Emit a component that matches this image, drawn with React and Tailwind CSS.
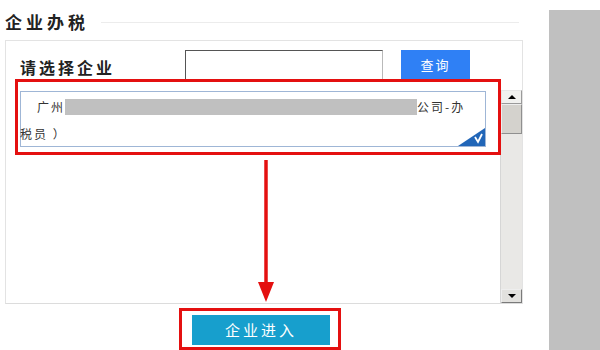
import React from "react";

const cjk = { fontFamily: '"Noto Sans CJK SC", "Noto Sans", sans-serif' };

const ScrollBar = () => (
  <div className="w-[22px] flex flex-col bg-[#e9e8e6] border-l border-[#d6d6d6]">
    <div className="h-[14px] flex items-center justify-center bg-[#f1f1ef] border border-[#9a9a9a] border-t-[#e6e6e6] border-l-[#e6e6e6]">
      <div className="w-0 h-0 border-l-[4px] border-r-[4px] border-b-[4px] border-l-transparent border-r-transparent border-b-black" />
    </div>
    <div className="h-[30px] bg-[#d4d2cd] border border-[#8f8f8f] border-t-[#eeeeee] border-l-[#eeeeee]" />
    <div className="flex-1" />
    <div className="h-[14px] flex items-center justify-center bg-[#e2e1de] border border-[#7a7a7a] border-t-[#eeeeee] border-l-[#eeeeee]">
      <div className="w-0 h-0 border-l-[4px] border-r-[4px] border-t-[4px] border-l-transparent border-r-transparent border-t-black" />
    </div>
  </div>
);

const CompanyItem = () => (
  <div className="relative w-[466px] h-[56px] border border-[#9fb6d6] text-[12px] leading-[27px] tracking-[2px] text-[#333]">
    <div className="pl-[16px] pt-[1px] flex items-center">
      <span>广州</span>
      <span className="inline-block w-[352px] h-[16px] bg-[#c0c0c0]" />
      <span>公司-办</span>
    </div>
    <div className="-ml-[1px]">税员 ）</div>
    <svg className="absolute right-0 bottom-0" width="27" height="18" viewBox="0 0 27 18">
      <polygon points="27,0 27,18 0,18" fill="#2166b8" />
      <path d="M17 9 L20 14 L24 6" stroke="#fff" strokeWidth="1.8" fill="none" />
    </svg>
  </div>
);

export default function App() {
  return (
    <div className="relative w-[600px] h-[350px] bg-white overflow-hidden flex" style={cjk}>
      <div className="w-[549px] flex flex-col">
        {/* Header */}
        <div className="h-[40px] flex items-center pl-[5px] pt-[4px] gap-[12px]">
          <h1 className="text-[17px] font-bold tracking-[4px] text-[#222]">企业办税</h1>
          <div className="w-[418px] h-px bg-[#ececec]" />
        </div>

        {/* Panel */}
        <div className="ml-[5px] w-[518px] h-[264px] border border-[#e3e3e3] border-b-[#dcdcdc] flex flex-col">
          <div className="h-[49px] pt-[9px] flex items-start">
            <label className="w-[179px] pl-[14px] pt-[5px] text-[16px] font-bold tracking-[3px] text-[#222]">
              请选择企业
            </label>
            <input className="w-[198px] h-[30px] border border-[#b9b9b9] border-t-[#555] border-l-[#555] outline-none" />
            <button className="ml-[18px] w-[69px] h-[30px] bg-[#2f80f5] text-white text-[13px] tracking-[2px]">
              查询
            </button>
          </div>

          <div className="flex-1 flex">
            <div className="flex-1 pl-[14px] pt-[1px]">
              <CompanyItem />
            </div>
            <ScrollBar />
          </div>
        </div>

        {/* Enter button */}
        <div className="pt-[11px] pl-[192px]">
          <button className="w-[138px] h-[30px] bg-[#179fcd] text-white text-[15px] tracking-[3px]">
            企业进入
          </button>
        </div>
      </div>

      {/* Right gray block */}
      <div className="mt-[10px] flex-1 bg-[#c0c0c0]" />

      {/* Red annotations */}
      <div className="absolute left-[15px] top-[79px] w-[486px] h-[76px] border-[3px] border-[#e41010]" />
      <div className="absolute left-[179px] top-[308px] w-[162px] h-[42px] border-[3px] border-[#e41010]" />
      <svg className="absolute left-[255px] top-[158px]" width="22" height="146" viewBox="0 0 22 146">
        <line x1="11" y1="2" x2="11" y2="128" stroke="#e41010" strokeWidth="3.5" />
        <polygon points="3,124 19,124 11,144" fill="#e41010" />
      </svg>
    </div>
  );
}
